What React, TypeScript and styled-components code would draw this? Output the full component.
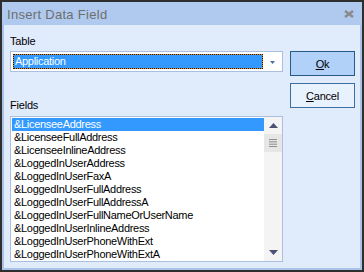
import React from 'react';
import styled, { createGlobalStyle } from 'styled-components';

const GlobalStyle = createGlobalStyle`
  body {
    margin: 0;
    font-family: "Liberation Sans", Arial, sans-serif;
    font-size: 11px;
    color: #000;
  }
`;

const fields = [
  '&LicenseeAddress',
  '&LicenseeFullAddress',
  '&LicenseeInlineAddress',
  '&LoggedInUserAddress',
  '&LoggedInUserFaxA',
  '&LoggedInUserFullAddress',
  '&LoggedInUserFullAddressA',
  '&LoggedInUserFullNameOrUserName',
  '&LoggedInUserInlineAddress',
  '&LoggedInUserPhoneWithExt',
  '&LoggedInUserPhoneWithExtA',
];

const App = () => {
  return (
    <>
      <GlobalStyle />
      <Window>
        <TitleBar>
          <Title>Insert Data Field</Title>
          <CloseIcon width="10" height="8" viewBox="0 0 10 8">
            <path d="M1 1 L9 7 M9 1 L1 7" stroke="#8a8a8a" strokeWidth="2.4" />
          </CloseIcon>
        </TitleBar>
        <Body>
          <Main>
            <Label>Table</Label>
            <Combo>
              <FocusFrame>
                <ComboValue>Application</ComboValue>
              </FocusFrame>
              <ArrowCell>
                <svg width="5" height="3" viewBox="0 0 5 3">
                  <path d="M0 0 H5 L2.5 3 Z" fill="#4a6aa8" />
                </svg>
              </ArrowCell>
            </Combo>
            <Label $top={27}>Fields</Label>
            <ListBox>
              <Items>
                {fields.map((f, i) => (
                  <Item key={f} $selected={i === 0}>{f}</Item>
                ))}
              </Items>
              <ScrollBar>
                <ScrollArrow>
                  <svg width="9" height="5" viewBox="0 0 9 5">
                    <path d="M4.5 0 L9 5 H0 Z" fill="#4b5273" />
                  </svg>
                </ScrollArrow>
                <Thumb>
                  <svg width="8" height="9" viewBox="0 0 8 9">
                    <path d="M0 0.5 H8 M0 2.8 H8 M0 5.2 H8 M0 7.5 H8" stroke="#8e8e8e" strokeWidth="1" />
                  </svg>
                </Thumb>
                <Track />
                <ScrollArrow>
                  <svg width="9" height="5" viewBox="0 0 9 5">
                    <path d="M0 0 H9 L4.5 5 Z" fill="#4b5273" />
                  </svg>
                </ScrollArrow>
              </ScrollBar>
            </ListBox>
          </Main>
          <Buttons>
            <Button $primary>
              <u>O</u>k
            </Button>
            <Button>
              <u>C</u>ancel
            </Button>
          </Buttons>
        </Body>
      </Window>
    </>
  );
};

export default App;

const Window = styled.div`
  width: 364px;
  height: 272px;
  box-sizing: border-box;
  border: 2px solid #2e2e2e;
  display: flex;
  flex-direction: column;
  background: #e0ebfc;
`;

const TitleBar = styled.div`
  height: 23px;
  flex-shrink: 0;
  background: #b0c9ee;
  display: flex;
  align-items: center;
  justify-content: space-between;
  padding: 0 8px 0 5px;
`;

const Title = styled.div`
  font-size: 13px;
  letter-spacing: 0.3px;
  color: #6e6e6e;
  margin-top: 1px;
`;

const CloseIcon = styled.svg`
  display: block;
  margin-top: 1px;
`;

const Body = styled.div`
  flex: 1;
  display: flex;
  gap: 7px;
  padding: 0 5px 0 6px;
  border: 2px solid #a9c3e9;
  border-top: none;
`;

const Main = styled.div`
  width: 273px;
  display: flex;
  flex-direction: column;
  padding-top: 10px;
`;

const Label = styled.div<{ $top?: number }>`
  height: 13px;
  line-height: 13px;
  margin-top: ${(p) => p.$top || 0}px;
  letter-spacing: -0.2px;
`;

const Combo = styled.div`
  margin-top: 3px;
  height: 21px;
  box-sizing: border-box;
  border: 1px solid #a9bfdd;
  background: #fff;
  display: flex;
  padding: 2px 0 2px 2px;
`;

const FocusFrame = styled.div`
  width: 250px;
  height: 15px;
  background: #d9861c;
`;

const ComboValue = styled.div`
  height: 100%;
  box-sizing: border-box;
  border: 1px dotted #1a1a1a;
  background: #3399ff;
  background-clip: padding-box;
  color: #fff;
  line-height: 13px;
  padding-left: 1px;
  letter-spacing: -0.3px;
`;

const ArrowCell = styled.div`
  flex: 1;
  display: flex;
  align-items: center;
  justify-content: center;
  padding-top: 1px;

  svg {
    display: block;
  }
`;

const ListBox = styled.div`
  margin-top: 4px;
  height: 146px;
  box-sizing: border-box;
  border: 1px solid #a9c0e0;
  background: #fff;
  display: flex;
`;

const Items = styled.div`
  flex: 1;
  padding: 1px 0 0 1px;
  overflow: hidden;
`;

const Item = styled.div<{ $selected?: boolean }>`
  height: 13px;
  line-height: 13px;
  padding-left: 2px;
  white-space: nowrap;
  letter-spacing: -0.3px;
  background: ${(p) => (p.$selected ? '#3399ff' : 'transparent')};
  color: ${(p) => (p.$selected ? '#fff' : '#000')};
`;

const ScrollBar = styled.div`
  width: 18px;
  display: flex;
  flex-direction: column;
  background: #f4f4f4;
`;

const ScrollArrow = styled.div`
  height: 17px;
  display: flex;
  align-items: center;
  justify-content: center;

  svg {
    display: block;
  }
`;

const Thumb = styled.div`
  height: 18px;
  background: #e6e6e6;
  display: flex;
  align-items: center;
  justify-content: center;

  svg {
    display: block;
  }
`;

const Track = styled.div`
  flex: 1;
`;

const Buttons = styled.div`
  display: flex;
  flex-direction: column;
  gap: 7px;
  padding-top: 26px;
`;

const Button = styled.button<{ $primary?: boolean }>`
  width: 65px;
  height: 25px;
  box-sizing: border-box;
  border: 1px solid ${(p) => (p.$primary ? '#285a87' : '#3e6e9d')};
  background: ${(p) => (p.$primary ? '#b2d1f9' : '#e8f1fe')};
  font-family: "Liberation Sans", Arial, sans-serif;
  font-size: 11px;
  color: #000;
  padding: 0;
  letter-spacing: -0.2px;
`;
